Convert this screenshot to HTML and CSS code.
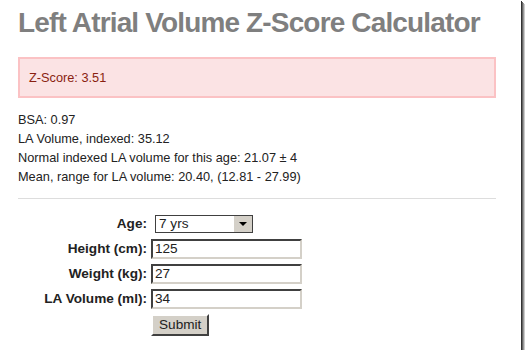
FILE: index.html
```html
<!DOCTYPE html>
<html lang="en">
<head>
    <meta charset="UTF-8">
    <title>Left Atrial Volume Z-Score Calculator</title>
    <link rel="stylesheet" href="styles.css">
</head>
<body>
<div class="window">
    <h1>Left Atrial Volume Z-Score Calculator</h1>

    <div class="error">Z-Score: 3.51</div>

    <p class="results">
        BSA: 0.97<br>
        LA Volume, indexed: 35.12<br>
        Normal indexed LA volume for this age: 21.07 &plusmn; 4<br>
        Mean, range for LA volume: 20.40, (12.81 - 27.99)
    </p>

    <hr>

    <form class="calc">
        <table>
            <tr>
                <td class="lbl"><label for="age">Age:</label></td>
                <td>
                    <div class="select">
                        <span class="select-val">7 yrs</span>
                        <span class="select-btn"></span>
                    </div>
                </td>
            </tr>
            <tr>
                <td class="lbl"><label for="height">Height (cm):</label></td>
                <td><input type="text" id="height" value="125"></td>
            </tr>
            <tr>
                <td class="lbl"><label for="weight">Weight (kg):</label></td>
                <td><input type="text" id="weight" value="27"></td>
            </tr>
            <tr>
                <td class="lbl"><label for="lavol">LA Volume (ml):</label></td>
                <td><input type="text" id="lavol" value="34"></td>
            </tr>
            <tr>
                <td></td>
                <td><button type="submit">Submit</button></td>
            </tr>
        </table>
    </form>
</div>
</body>
</html>
```

FILE: styles.css
```css
body {
    margin: 0;
    background: #fff;
    font-family: "Liberation Sans", Arial, sans-serif;
    font-size: 12.75px;
    line-height: 18px;
    color: #222;
}
.window {
    width: 521px;
    height: 350px;
    box-sizing: border-box;
    padding: 6px 0 0 18px;
    box-shadow: 1px 1px 0 #333, 2px 2px 0 #666, 3px 3px 0 #999, 4px 4px 0 #ccc;
    overflow: hidden;
}
h1 {
    margin: 0;
    font-size: 28px;
    letter-spacing: -0.85px;
    line-height: 34px;
    white-space: nowrap;
    color: #7f7f7f;
}
.error {
    width: 478px;
    margin-top: 17px;
    padding: 10px 9px;
    box-sizing: border-box;
    height: 41px;
    background: #fbe3e4;
    border: 2px solid #fbc2c4;
    color: #8a1f11;
}
.results {
    margin: 12px 0 0;
    line-height: 19px;
}
hr {
    width: 478px;
    margin: 12px 0 0;
    height: 1px;
    border: none;
    background: #ddd;
}
.calc table {
    border-collapse: collapse;
    margin-top: 12px;
}
.calc td {
    padding: 0;
    height: 25px;
    vertical-align: middle;
}
.lbl {
    width: 129px;
    padding-right: 4px !important;
    text-align: right;
    font-size: 13.6px;
    font-weight: bold;
    color: #222;
}
input {
    width: 151px;
    height: 20px;
    box-sizing: border-box;
    margin: 0;
    padding: 0 2px;
    font-family: "Liberation Sans", Arial, sans-serif;
    font-size: 13.6px;
    color: #222;
    border: 2px solid;
    border-color: #404040 #d4d0c8 #d4d0c8 #404040;
    outline: none;
}
.select {
    margin-left: 4px;
    width: 98px;
    height: 18px;
    box-sizing: border-box;
    border: 1px solid #404040;
    display: flex;
    font-size: 13.6px;
    line-height: 16px;
}
.select-val {
    flex: 1;
    padding-left: 3px;
}
.select-btn {
    width: 18px;
    background: #d4d0c8;
    border-left: 1px solid #fff;
    position: relative;
}
.select-btn::after {
    content: "";
    position: absolute;
    left: 5px;
    top: 6px;
    border: 4px solid transparent;
    border-top: 4px solid #000;
    border-bottom: none;
}
button {
    margin-top: 2px;
    height: 22px;
    padding: 0 6px;
    font-family: "Liberation Sans", Arial, sans-serif;
    font-size: 13.6px;
    color: #222;
    background: #d4d0c8;
    border: 2px solid;
    border-color: #fff #404040 #404040 #fff;
}
```
